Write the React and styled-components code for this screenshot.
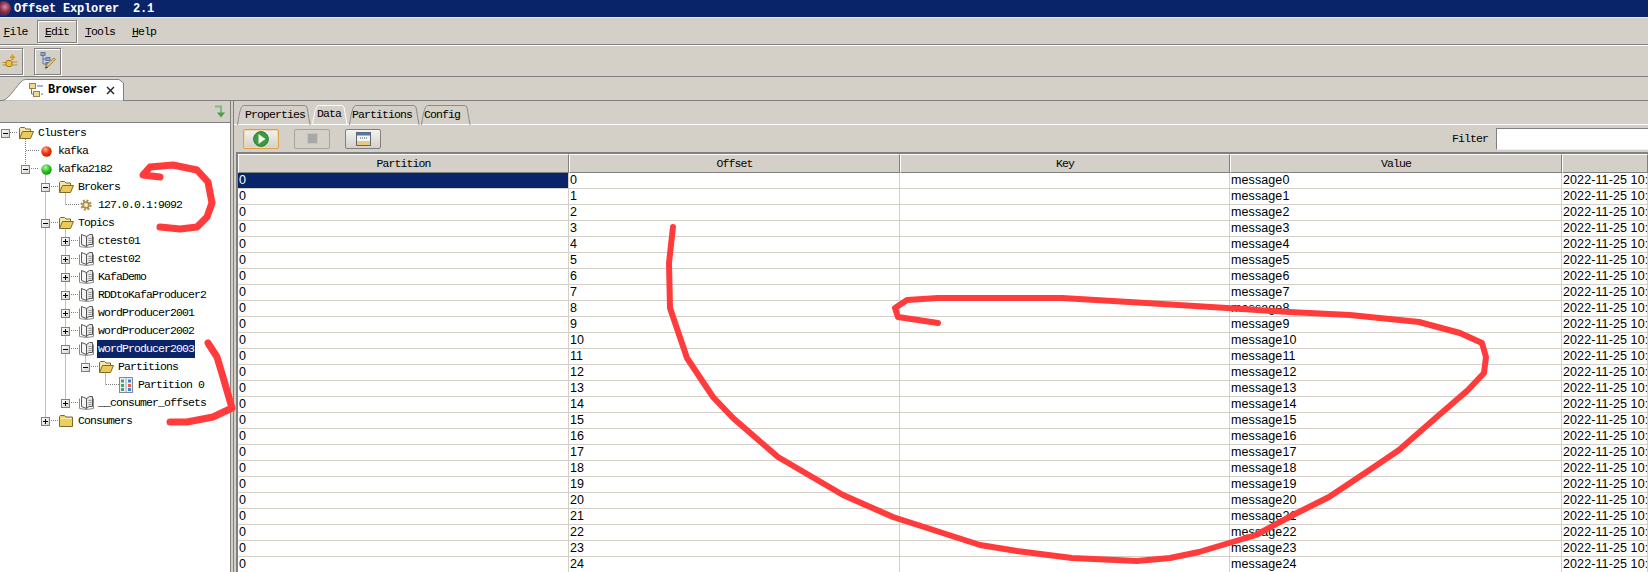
import styled, { createGlobalStyle } from "styled-components";

const GlobalStyle = createGlobalStyle`
  html, body {
    margin: 0;
    padding: 0;
    background: #d4d0c8;
    overflow: hidden;
  }
  * { box-sizing: border-box; }
`;

const NAVY = "#0a246a";
const FACE = "#d4d0c8";
const SHADOW = "#808080";
const MONO = `"Liberation Mono", "DejaVu Sans Mono", monospace`;

const Window = styled.div`
  position: relative;
  width: 1648px;
  height: 572px;
  overflow: hidden;
  display: flex;
  flex-direction: column;
  background: ${FACE};
  font-family: ${MONO};
  font-size: 11.5px;
  letter-spacing: -0.9px;
  color: #000;
`;

const TitleBar = styled.div`
  height: 18px;
  flex: none;
  display: flex;
  align-items: center;
  gap: 3px;
  background: ${NAVY};
  border-bottom: 1px solid #e8e6e0;
  color: #fff;
  font-weight: bold;
  font-size: 12px;
  letter-spacing: -0.2px;
  white-space: pre;
  overflow: hidden;
`;

const MenuBar = styled.div`
  height: 27px;
  flex: none;
  display: flex;
  align-items: center;
  border-bottom: 1px solid ${SHADOW};
`;

const MenuItem = styled.div`
  width: ${(p) => p.$width}px;
  margin-right: ${(p) => p.$gap || 0}px;
  height: 23px;
  display: flex;
  align-items: center;
  justify-content: center;
  ${(p) =>
    p.$active &&
    `border: 1px solid ${SHADOW};
     box-shadow: 1px 1px 0 #fff, inset 1px 1px 0 #fff;`}
  u { text-underline-offset: 1px; }
`;

const ToolBar = styled.div`
  height: 32px;
  flex: none;
  display: flex;
  align-items: center;
  gap: 11px;
  margin-left: -4px;
  border-top: 1px solid #fff;
  border-bottom: 1px solid ${SHADOW};
`;

const ToolButton = styled.div`
  width: 27px;
  height: 27px;
  display: flex;
  align-items: center;
  justify-content: center;
  border: 1px solid ${SHADOW};
  box-shadow: 1px 1px 0 #fff, inset 1px 1px 0 #fff;
`;

const TabStrip = styled.div`
  height: 24px;
  flex: none;
  display: flex;
  align-items: flex-end;
  padding-left: 3px;
  border-bottom: 1px solid ${SHADOW};
`;

const EditorTab = styled.div`
  position: relative;
  width: 121px;
  height: 22px;
  display: flex;
  align-items: center;
  padding-left: 26px;
  margin-bottom: -1px;
`;

const TabShape = styled.svg`
  position: absolute;
  left: 0;
  top: 0;
  z-index: 0;
`;

const TabLabel = styled.span`
  position: relative;
  z-index: 1;
  margin-left: 4px;
  width: 58px;
  font-size: 12px;
  font-weight: bold;
  letter-spacing: -0.2px;
`;

const CloseMark = styled.svg`
  position: relative;
  z-index: 1;
`;

const Workbench = styled.div`
  flex: 1;
  min-height: 0;
  display: flex;
`;

const LeftPane = styled.div`
  width: 231px;
  flex: none;
  display: flex;
  flex-direction: column;
  border-right: 1px solid ${SHADOW};
`;

const PaneHeader = styled.div`
  height: 21px;
  flex: none;
  display: flex;
  justify-content: flex-end;
  align-items: center;
  padding-right: 3px;
`;

const TreeBody = styled.div`
  position: relative;
  flex: 1;
  padding-top: 1px;
  background: #fff;
  border-top: 1px solid ${SHADOW};
`;

const Guides = styled.svg`
  position: absolute;
  left: 0;
  top: 0;
`;

const TreeRow = styled.div`
  position: relative;
  height: 18px;
  display: flex;
  align-items: center;
  padding-left: ${(p) => p.$level * 20}px;
  white-space: pre;
`;

const ExpanderSlot = styled.div`
  width: 18px;
  flex: none;
  display: flex;
  padding-left: 1px;
`;

const Expander = styled.div`
  position: relative;
  width: 9px;
  height: 9px;
  border: 1px solid #7f7f7f;
  background: linear-gradient(135deg, #fff, #d8d4cc);
  &::before {
    content: "";
    position: absolute;
    left: 1px;
    top: 3px;
    width: 5px;
    height: 1px;
    background: #000;
  }
  ${(p) =>
    p.$closed &&
    `&::after {
      content: "";
      position: absolute;
      left: 3px;
      top: 1px;
      width: 1px;
      height: 5px;
      background: #000;
    }`}
`;

const IconSlot = styled.div`
  width: 16px;
  height: 16px;
  flex: none;
  display: flex;
  align-items: center;
  justify-content: center;
`;

const NodeLabel = styled.span`
  margin-left: ${(p) => (p.$selected ? 3 : 4)}px;
  height: 18px;
  line-height: 18px;
  padding: ${(p) => (p.$selected ? "0 1px" : "0")};
  background: ${(p) => (p.$selected ? NAVY : "transparent")};
  color: ${(p) => (p.$selected ? "#fff" : "#000")};
`;

const Sash = styled.div`
  width: 2px;
  flex: none;
`;

const RightPane = styled.div`
  flex: 1;
  min-width: 0;
  display: flex;
  flex-direction: column;
  padding-top: 3px;
  border-left: 1px solid ${SHADOW};
`;

const SubTabs = styled.div`
  height: 21px;
  flex: none;
  display: flex;
  padding-left: 3px;
`;

const SubTab = styled.div`
  position: relative;
  width: ${(p) => p.$width}px;
  height: 21px;
  margin-right: 1px;
  padding-left: ${(p) => p.$pad}px;
  padding-top: ${(p) => (p.$active ? 0 : 1)}px;
  line-height: 20px;
  span { position: relative; z-index: 1; }
`;

const DataBar = styled.div`
  height: 28px;
  flex: none;
  display: flex;
  align-items: center;
  padding-left: 9px;
  gap: 15px;
  margin-top: -1px;
  border-top: 1px solid #fff;
`;

const RunButton = styled.div`
  width: 36px;
  height: 20px;
  display: flex;
  align-items: center;
  justify-content: center;
  border-radius: 2px;
  border: 1px solid ${(p) => (p.$focus ? "#e0a040" : p.$disabled ? "#a8a49c" : SHADOW)};
  background: ${(p) => (p.$disabled ? FACE : "linear-gradient(#f4f3f0, #d4d0c8)")};
  ${(p) => p.$focus && "box-shadow: inset 0 0 0 1px #f0d8a8;"}
`;

const FilterBox = styled.div`
  margin-left: auto;
  display: flex;
  align-items: center;
  gap: 8px;
`;

const FilterInput = styled.div`
  width: 152px;
  height: 22px;
  background: #fff;
  border-top: 1px solid ${SHADOW};
  border-left: 1px solid ${SHADOW};
  border-bottom: 1px solid #eee;
`;

const TableFrame = styled.div`
  flex: 1;
  min-height: 0;
  margin-left: 2px;
  border-top: 2px solid ${SHADOW};
  border-left: 2px solid ${SHADOW};
  background: #fff;
`;

const Grid = styled.div`
  display: grid;
  grid-template-columns: 331px 331px 330px 332px 1fr;
`;

const HeaderCell = styled.div`
  height: 19px;
  display: flex;
  align-items: center;
  justify-content: center;
  background: ${FACE};
  border-top: 1px solid #fff;
  border-left: 1px solid #fff;
  border-right: 1px solid ${SHADOW};
  border-bottom: 1px solid ${SHADOW};
`;

const Cell = styled.div`
  height: 16px;
  line-height: 15px;
  padding-left: 1px;
  overflow: hidden;
  white-space: nowrap;
  font-family: "Liberation Sans", Arial, sans-serif;
  font-size: 12.5px;
  letter-spacing: 0.1px;
  border-right: 1px solid ${FACE};
  border-bottom: 1px solid ${FACE};
  background: ${(p) => (p.$selected ? NAVY : "#fff")};
  color: ${(p) => (p.$selected ? "#fff" : "#000")};
`;

const InkLayer = styled.svg`
  position: absolute;
  left: 0;
  top: 0;
  pointer-events: none;
`;

function OpenFolder() {
  return (
    <svg width="16" height="14" viewBox="0 0 16 14">
      <path d="M1.5 12.5V2.5L2.5 1.5H6.5L8 3H12.5V5.5" fill="#f6e9a8" stroke="#7c6a28" />
      <path d="M1.5 12.5L4.5 5.5H15.5L12.5 12.5Z" fill="#ecc95c" stroke="#7c6a28" />
    </svg>
  );
}

function ClosedFolder() {
  return (
    <svg width="16" height="14" viewBox="0 0 16 14">
      <path d="M1.5 12.5V2.5L2.5 1.5H6.5L8 3H14.5V12.5Z" fill="#ecd05e" stroke="#7c6a28" />
      <path d="M2.5 4.5H13.5" stroke="#fbf1b8" />
    </svg>
  );
}

function Ball({ color }) {
  const id = `ball-${color}`;
  const stops = color === "red" ? ["#ffb090", "#f03a10", "#c02000"] : ["#b8f8a0", "#30c828", "#109010"];
  return (
    <svg width="11" height="11" viewBox="0 0 11 11">
      <defs>
        <radialGradient id={id} cx="0.4" cy="0.3" r="0.7">
          <stop offset="0" stopColor={stops[0]} />
          <stop offset="0.55" stopColor={stops[1]} />
          <stop offset="1" stopColor={stops[2]} />
        </radialGradient>
      </defs>
      <circle cx="5.5" cy="5.5" r="5.2" fill={`url(#${id})`} />
    </svg>
  );
}

function Gear() {
  return (
    <svg width="12" height="12" viewBox="0 0 12 12">
      <circle cx="6" cy="6" r="4.6" fill="none" stroke="#b08840" strokeWidth="2" strokeDasharray="2 1.6" />
      <circle cx="6" cy="6" r="3.2" fill="#e8c888" stroke="#8a6a30" />
      <circle cx="6" cy="6" r="1.2" fill="#fff" />
    </svg>
  );
}

function Book() {
  return (
    <svg width="15" height="14" viewBox="0 0 15 14">
      <path d="M7.5 2.5L2.5 0.5V10.5L7.5 12.5Z" fill="#f4f4f4" stroke="#555" />
      <path d="M7.5 2.5L10.5 0.5H13.5V10.5H10L7.5 12.5Z" fill="#e4e4e4" stroke="#555" />
      <path d="M0.5 2.5V12.5L7.5 13.5L14.5 12.5V2.5" fill="none" stroke="#8a8a8a" />
      <path d="M9.5 4.5H12.5M9.5 6.5H12.5M9.5 8.5H12.5" stroke="#999" />
    </svg>
  );
}

function PartitionIcon() {
  return (
    <svg width="14" height="16" viewBox="0 0 14 16">
      <rect x="0.5" y="0.5" width="13" height="15" fill="#eef2f6" stroke="#7a8a9a" />
      <path d="M7 1V15" stroke="#9aa8b8" />
      <rect x="2" y="2.5" width="3" height="3" fill="#40a860" />
      <rect x="2" y="7" width="3" height="3" fill="#40a860" />
      <rect x="2" y="11" width="3" height="3" fill="#40a860" />
      <rect x="9" y="2.5" width="3" height="3" fill="#4080d0" />
      <rect x="9" y="7" width="3" height="3" fill="#e86040" />
      <rect x="9" y="11" width="3" height="3" fill="#4080d0" />
    </svg>
  );
}

function AppOrb() {
  return (
    <svg width="11" height="17" viewBox="0 0 11 17">
      <defs>
        <radialGradient id="orb" cx="0.6" cy="0.4" r="0.7">
          <stop offset="0" stopColor="#c890b0" />
          <stop offset="0.5" stopColor="#8a2a40" />
          <stop offset="1" stopColor="#1a2a70" />
        </radialGradient>
      </defs>
      <circle cx="3.5" cy="8.5" r="7.5" fill="url(#orb)" />
    </svg>
  );
}

function PlugIcon() {
  return (
    <svg width="16" height="15" viewBox="0 0 16 15">
      <path d="M0.5 8.5H4M0.5 11H4M10 8H15.5M10 11H15.5" stroke="#c09020" />
      <rect x="4" y="6.5" width="6" height="6" rx="2" fill="#f0c040" stroke="#a07810" />
      <path d="M10.5 0.5V6M8 3.2H13" stroke="#d8a020" strokeWidth="2" />
    </svg>
  );
}

function TreeEditIcon() {
  return (
    <svg width="16" height="18" viewBox="0 0 16 18">
      <path d="M2 1.5H5M3 2V12H7M3 7H7" stroke="#5878a8" fill="none" />
      <rect x="1" y="0.5" width="4" height="3" fill="#88a8d0" stroke="#5878a8" />
      <rect x="6" y="5.5" width="4" height="3" fill="#88a8d0" stroke="#5878a8" />
      <rect x="6" y="10.5" width="3" height="3" fill="#88a8d0" stroke="#5878a8" />
      <path d="M5 16L7 12L14 6L15.5 7.5L9 14Z" fill="#e8c070" stroke="#8a6a30" strokeWidth="0.7" />
      <path d="M5 17L6.5 14.5L8 15.5Z" fill="#303030" />
    </svg>
  );
}

function BrowserIcon() {
  return (
    <svg width="15" height="14" viewBox="0 0 15 14" style={{ position: "relative", zIndex: 1 }}>
      <rect x="0.5" y="0.5" width="6" height="5" fill="#f0d890" stroke="#a08040" />
      <rect x="4.5" y="8.5" width="6" height="5" fill="#f0d890" stroke="#a08040" />
      <path d="M2.5 6V11H4.5" stroke="#5878a8" fill="none" />
      <path d="M8 3H14M12 11H14" stroke="#4070a8" />
    </svg>
  );
}

function GreenArrowIcon() {
  return (
    <svg width="13" height="14" viewBox="0 0 13 14">
      <path d="M1 1.5H7V8" fill="none" stroke="#80b880" strokeWidth="2" />
      <path d="M3 7.5H11L7 12.5Z" fill="#48a048" />
    </svg>
  );
}

function PlayIcon() {
  return (
    <svg width="16" height="16" viewBox="0 0 16 16">
      <circle cx="8" cy="8" r="7.4" fill="#3c9a40" stroke="#2a7a30" />
      <path d="M5.5 3L12.5 8L5.5 13Z" fill="#f2f6e8" />
    </svg>
  );
}

function StopIcon() {
  return (
    <svg width="11" height="11" viewBox="0 0 11 11">
      <rect x="0.5" y="0.5" width="10" height="10" fill="#a8a8a8" stroke="#c4c4c4" />
    </svg>
  );
}

function ViewIcon() {
  return (
    <svg width="15" height="14" viewBox="0 0 15 14">
      <rect x="0.5" y="0.5" width="14" height="13" fill="#f4f4f0" stroke="#606878" />
      <rect x="1" y="1" width="13" height="2.5" fill="#4878b8" />
      <rect x="1" y="9" width="13" height="4" fill="#e8c880" />
      <path d="M4 6H11" stroke="#555" strokeDasharray="1 1" />
    </svg>
  );
}

function TreeGuides() {
  // row centres are 18px apart, first one at y=10 inside the tree body
  const y = (row) => 9.5 + row * 18;
  const lines = [
    [25.5, 14, 25.5, y(2) - 4],
    [45.5, y(2) + 5, 45.5, y(16)],
    [65.5, y(3) + 5, 65.5, y(4)],
    [65.5, y(5) + 5, 65.5, y(15)],
    [85.5, y(12) + 5, 85.5, y(13)],
    [105.5, y(13) + 5, 105.5, y(14)],
    [10, y(0), 18, y(0)],
    [26, y(1), 40, y(1)],
    [31, y(2), 38, y(2)],
    [51, y(3), 58, y(3)],
    [66, y(4), 80, y(4)],
    [51, y(5), 58, y(5)],
    [71, y(6), 78, y(6)],
    [71, y(7), 78, y(7)],
    [71, y(8), 78, y(8)],
    [71, y(9), 78, y(9)],
    [71, y(10), 78, y(10)],
    [71, y(11), 78, y(11)],
    [71, y(12), 78, y(12)],
    [91, y(13), 98, y(13)],
    [106, y(14), 119, y(14)],
    [71, y(15), 78, y(15)],
    [51, y(16), 58, y(16)],
  ];
  return (
    <Guides width="230" height="450">
      {lines.map(([x1, y1, x2, y2], i) => (
        <line key={i} x1={x1} y1={y1} x2={x2} y2={y2} stroke="#808080" strokeDasharray="1 1" />
      ))}
    </Guides>
  );
}

const topic = (name, extra = {}) => ({ level: 3, icon: "book", label: name, expander: "closed", ...extra });

const TREE = [
  { level: 0, icon: "open", label: "Clusters", expander: "open" },
  { level: 1, icon: "red", label: "kafka" },
  { level: 1, icon: "green", label: "kafka2182", expander: "open" },
  { level: 2, icon: "open", label: "Brokers", expander: "open" },
  { level: 3, icon: "gear", label: "127.0.0.1:9092" },
  { level: 2, icon: "open", label: "Topics", expander: "open" },
  topic("ctest01"),
  topic("ctest02"),
  topic("KafaDemo"),
  topic("RDDtoKafaProducer2"),
  topic("wordProducer2001"),
  topic("wordProducer2002"),
  topic("wordProducer2003", { expander: "open", selected: true }),
  { level: 4, icon: "open", label: "Partitions", expander: "open" },
  { level: 5, icon: "partition", label: "Partition 0" },
  topic("__consumer_offsets"),
  { level: 2, icon: "closed", label: "Consumers", expander: "closed" },
];

const ICONS = {
  open: <OpenFolder />,
  closed: <ClosedFolder />,
  red: <Ball color="red" />,
  green: <Ball color="green" />,
  gear: <Gear />,
  book: <Book />,
  partition: <PartitionIcon />,
};

const SUB_TABS = [
  { label: "Properties", width: 74, pad: 8 },
  { label: "Data", width: 36, pad: 5, active: true },
  { label: "Partitions", width: 71, pad: 3 },
  { label: "Config", width: 50, pad: 3 },
];

const COLUMNS = ["Partition", "Offset", "Key", "Value", ""];
const ROWS = Array.from({ length: 25 }, (_, i) => i);

const INK = [
  { width: 7, d: "M160 177L143 175L150 167L173 165L197 170L208 182L212 203L207 217L197 227L180 229L160 227" },
  { width: 7, d: "M208 343L217 357L223 377L232 408L213 417L187 422L170 422" },
  { width: 6, d: "M673 227L669 263L670 308L687 358L713 397L733 418L778 457L843 495L893 517L980 545L1017 551L1072 558L1137 561L1170 558L1199 552L1256 535L1293 515L1329 497L1374 467L1399 450L1431 422L1468 390L1484 373L1486 357L1482 343L1460 333L1419 322L1350 315L1289 312L1227 308L1146 303L1062 298L938 298L907 300L895 308L898 317L938 323" },
];

export default function App() {
  return (
    <Window>
      <GlobalStyle />
      <TitleBar>
        <AppOrb />
        {"Offset Explorer  2.1"}
      </TitleBar>
      <MenuBar>
        <MenuItem $width={31} $gap={6}><span><u>F</u>ile</span></MenuItem>
        <MenuItem $width={40} $gap={3} $active><span><u>E</u>dit</span></MenuItem>
        <MenuItem $width={40} $gap={6}><span><u>T</u>ools</span></MenuItem>
        <MenuItem $width={36}><span><u>H</u>elp</span></MenuItem>
      </MenuBar>
      <ToolBar>
        <ToolButton><PlugIcon /></ToolButton>
        <ToolButton><TreeEditIcon /></ToolButton>
      </ToolBar>
      <TabStrip>
        <EditorTab>
          <TabShape width="121" height="22">
            <path d="M0 21.5C6 20 14 6 19 2C20 1 21 0.5 24 0.5H116L120.5 4V22H0Z" fill="#fff" stroke="#808080" />
          </TabShape>
          <BrowserIcon />
          <TabLabel>Browser</TabLabel>
          <CloseMark width="9" height="9" viewBox="0 0 9 9">
            <path d="M1 1L8 8M8 1L1 8" stroke="#222" strokeWidth="1.4" />
          </CloseMark>
        </EditorTab>
      </TabStrip>
      <Workbench>
        <LeftPane>
          <PaneHeader><GreenArrowIcon /></PaneHeader>
          <TreeBody>
            <TreeGuides />
            {TREE.map((node) => (
              <TreeRow key={node.label} $level={node.level}>
                <ExpanderSlot>
                  {node.expander && <Expander $closed={node.expander === "closed"} />}
                </ExpanderSlot>
                <IconSlot>{ICONS[node.icon]}</IconSlot>
                <NodeLabel $selected={node.selected}>{node.label}</NodeLabel>
              </TreeRow>
            ))}
          </TreeBody>
        </LeftPane>
        <Sash />
        <RightPane>
          <SubTabs>
            {SUB_TABS.map((tab) => (
              <SubTab key={tab.label} $width={tab.width} $pad={tab.pad} $active={tab.active}>
                <TabShape width={tab.width} height="21">
                  <path
                    d={`M0.5 21C1.5 14 3 5 5 2.5L6.5 1.5H${tab.width - 6}L${tab.width - 4} 3L${tab.width - 1} 21`}
                    fill="none"
                    stroke={tab.active ? "#fff" : "#8c8c8c"}
                  />
                </TabShape>
                <span>{tab.label}</span>
              </SubTab>
            ))}
          </SubTabs>
          <DataBar>
            <RunButton $focus><PlayIcon /></RunButton>
            <RunButton $disabled><StopIcon /></RunButton>
            <RunButton><ViewIcon /></RunButton>
            <FilterBox>
              Filter
              <FilterInput />
            </FilterBox>
          </DataBar>
          <TableFrame>
            <Grid>
              {COLUMNS.map((name, i) => (
                <HeaderCell key={i}>{name}</HeaderCell>
              ))}
              {ROWS.map((i) => [
                <Cell key={`p${i}`} $selected={i === 0}>0</Cell>,
                <Cell key={`o${i}`}>{i}</Cell>,
                <Cell key={`k${i}`} />,
                <Cell key={`v${i}`}>message{i}</Cell>,
                <Cell key={`t${i}`}>2022-11-25 10:52:18</Cell>,
              ])}
            </Grid>
          </TableFrame>
        </RightPane>
      </Workbench>
      <InkLayer width="1648" height="572">
        {INK.map((s) => (
          <path key={s.d} d={s.d} fill="none" stroke="#ff3b3b" strokeWidth={s.width} strokeLinecap="round" strokeLinejoin="round" />
        ))}
      </InkLayer>
    </Window>
  );
}
